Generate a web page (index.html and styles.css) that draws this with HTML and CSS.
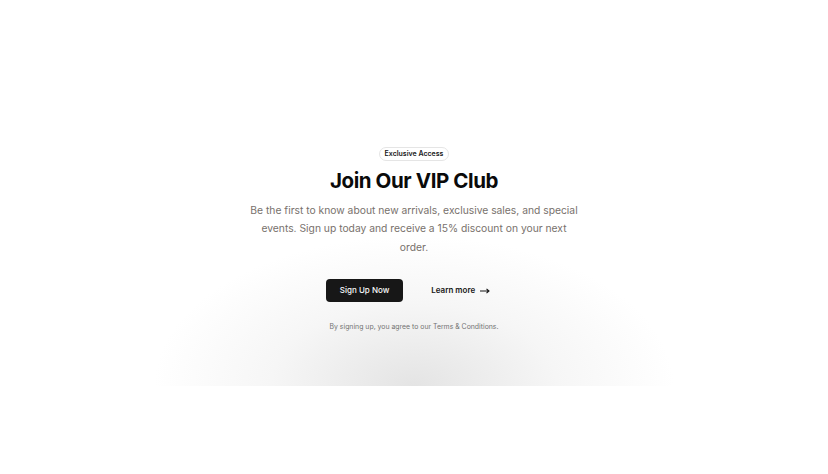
FILE: index.html
```html
<!DOCTYPE html>
<html lang="en">
<head>
<meta charset="utf-8">
<title>Join Our VIP Club</title>
<link rel="stylesheet" href="styles.css">
</head>
<body>
<section class="hero">
  <div class="content">
    <span class="badge">Exclusive Access</span>
    <h1 class="title">Join Our VIP Club</h1>
    <p class="lead">Be the first to know about new arrivals, exclusive sales, and special events. Sign up today and receive a 15% discount on your next order.</p>
    <div class="actions">
      <a class="btn-primary" href="#">Sign Up Now</a>
      <a class="btn-link" href="#">Learn more <svg class="arrow" width="10" height="6" viewBox="0 0 10 6" aria-hidden="true"><path d="M0 3H9M6.5 0.8L9 3L6.5 5.2" fill="none" stroke="#171717" stroke-width="1.1"/></svg></a>
    </div>
    <p class="note">By signing up, you agree to our Terms &amp; Conditions.</p>
  </div>
</section>
</body>
</html>
```

FILE: styles.css
```css
* { box-sizing: border-box; }
html, body { margin: 0; padding: 0; background: #ffffff; }
body {
  font-family: Inter, "Noto Sans", "Liberation Sans", sans-serif;
  min-height: 100vh;
  display: flex;
  flex-direction: column;
  justify-content: center;
}
.hero {
  width: 100%;
  padding: 55px 16px;
  background: radial-gradient(ellipse 260px 150px at 50% 100%, #e4e4e4 0%, rgba(240,240,240,0.6) 55%, rgba(255,255,255,0) 100%);
}
.content {
  max-width: 360px;
  margin: 0 auto;
  display: flex;
  flex-direction: column;
  align-items: center;
  text-align: center;
}
.badge {
  display: inline-block;
  font-size: 7px;
  font-weight: 600;
  color: #171717;
  border: 1px solid #e5e5e5;
  border-radius: 999px;
  padding: 1px 5px;
  line-height: 10px;
  margin-top: 4px;
}
.title {
  margin: 6px 0 0;
  font-size: 20.5px;
  font-weight: 700;
  letter-spacing: -0.02em;
  line-height: 28px;
  color: #0a0a0a;
}
.lead {
  margin: 6px 0 0;
  max-width: 334px;
  font-size: 10.3px;
  line-height: 18.5px;
  color: #78716c;
}
.actions {
  margin-top: 23px;
  display: flex;
  align-items: center;
  gap: 16px;
}
.btn-primary {
  display: inline-block;
  background: #171717;
  color: #fafafa;
  font-size: 8px;
  font-weight: 500;
  text-decoration: none;
  border-radius: 4px;
  padding: 6px 14px;
  line-height: 11px;
}
.btn-link {
  display: inline-flex;
  align-items: center;
  padding: 6px 12px;
  color: #171717;
  font-size: 8px;
  font-weight: 600;
  text-decoration: none;
  line-height: 11px;
}
.arrow { margin-left: 5px; }
.note {
  margin: 20px 0 0;
  font-size: 6.9px;
  color: #737373;
}
```
